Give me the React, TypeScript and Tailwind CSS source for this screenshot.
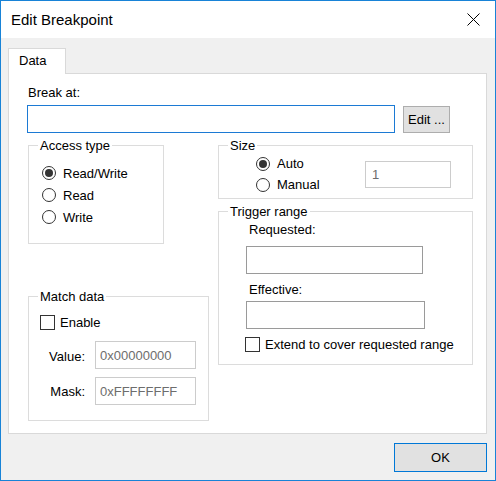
import type { ReactNode } from 'react'

const font = "font-['Liberation_Sans',Arial,sans-serif]"

function GroupBox({
  title,
  className,
  children,
}: {
  title: string
  className: string
  children: ReactNode
}) {
  return (
    <div className={`relative border border-[#dcdcdc] ${className}`}>
      <span className="absolute -top-[8px] left-[9px] bg-white px-[2px] leading-[15px]">
        {title}
      </span>
      {children}
    </div>
  )
}

function Radio({ label, checked }: { label: string; checked?: boolean }) {
  return (
    <div className="flex h-[22px] items-center gap-[7px]">
      <span className="flex h-[14px] w-[14px] items-center justify-center rounded-full border border-[#333333] bg-white">
        {checked ? <span className="h-[8px] w-[8px] rounded-full bg-[#333333]" /> : null}
      </span>
      <span className="leading-[15px]">{label}</span>
    </div>
  )
}

function Check({ label }: { label: string }) {
  return (
    <div className="flex items-center gap-[5px]">
      <span className="h-[15px] w-[15px] border border-[#333333] bg-white" />
      <span className="leading-[15px]">{label}</span>
    </div>
  )
}

function TextBox({
  className,
  value,
  disabled,
}: {
  className: string
  value?: string
  disabled?: boolean
}) {
  return (
    <div
      className={`flex items-center border bg-white px-[4px] leading-[15px] ${
        disabled ? 'border-[#cccccc] text-[#6d6d6d]' : 'border-[#9a9a9a]'
      } ${className}`}
    >
      {value}
    </div>
  )
}

export default function App() {
  return (
    <div
      className={`flex h-[481px] w-[496px] flex-col border border-[#1883d7] bg-[#f0f0f0] text-[13px] text-black ${font}`}
    >
      <div className="flex h-[37px] items-center justify-between bg-white pl-[10px] pr-[15px]">
        <span className="text-[15px] leading-[18px]">Edit Breakpoint</span>
        <svg width="13" height="13" viewBox="0 0 13 13" className="mb-[1px]">
          <path d="M0.5 0.5 L12.5 12.5 M12.5 0.5 L0.5 12.5" stroke="#000" strokeWidth="1" />
        </svg>
      </div>

      <div className="flex flex-1 flex-col pl-[7px] pt-[10px]">
        <div className="flex">
          <div className="relative z-10 -mb-px h-[26px] w-[58px] border border-b-0 border-[#d9d9d9] bg-white pl-[10px] pt-[4px] leading-[15px]">
            Data
          </div>
        </div>

        <div className="h-[361px] w-[479px] border border-[#d9d9d9] bg-white pl-[18px] pt-[11px]">
          <div className="ml-[1px] leading-[15px]">Break at:</div>
          <div className="mt-[5px] flex items-start">
            <div className="h-[28px] w-[368px] border border-[#1c7ad4] bg-white" />
            <button className="ml-[8px] mt-[1px] h-[27px] w-[47px] border border-[#adadad] bg-[#e1e1e1] leading-[15px]">
              Edit ...
            </button>
          </div>

          <div className="ml-[1px] mt-[12px] flex gap-[9px]">
            <div className="flex w-[181px] flex-col">
              <GroupBox title="Access type" className="h-[99px] w-[136px] pl-[13px] pt-[16px]">
                <Radio label="Read/Write" checked />
                <Radio label="Read" />
                <Radio label="Write" />
              </GroupBox>

              <GroupBox title="Match data" className="mt-[52px] h-[125px] w-[181px] pl-[11px] pt-[18px]">
                <Check label="Enable" />
                <div className="-ml-[11px] mt-[11px] flex items-center">
                  <span className="w-[56px] pt-[2px] text-right leading-[15px]">Value:</span>
                  <TextBox className="ml-[10px] h-[28px] w-[101px]" value="0x00000000" disabled />
                </div>
                <div className="-ml-[11px] mt-[8px] flex items-center">
                  <span className="w-[56px] text-right leading-[15px]">Mask:</span>
                  <TextBox className="ml-[10px] h-[28px] w-[101px]" value="0xFFFFFFFF" disabled />
                </div>
              </GroupBox>
            </div>

            <div className="flex w-[255px] flex-col">
              <GroupBox title="Size" className="flex h-[54px] w-[255px] pl-[37px] pt-[7px]">
                <div className="w-[109px]">
                  <div className="flex h-[21px] items-center gap-[7px]">
                    <span className="flex h-[14px] w-[14px] items-center justify-center rounded-full border border-[#333333] bg-white">
                      <span className="h-[8px] w-[8px] rounded-full bg-[#333333]" />
                    </span>
                    <span className="leading-[15px]">Auto</span>
                  </div>
                  <div className="flex h-[21px] items-center gap-[7px]">
                    <span className="h-[14px] w-[14px] rounded-full border border-[#333333] bg-white" />
                    <span className="leading-[15px]">Manual</span>
                  </div>
                </div>
                <TextBox className="mt-[8px] h-[27px] w-[86px] pl-[6px]" value="1" disabled />
              </GroupBox>

              <GroupBox title="Trigger range" className="mt-[12px] h-[154px] w-[255px] pl-[27px] pt-[10px]">
                <div className="ml-[3px] leading-[15px]">Requested:</div>
                <TextBox className="mt-[9px] h-[28px] w-[177px]" />
                <div className="ml-[3px] mt-[8px] leading-[15px]">Effective:</div>
                <TextBox className="mt-[4px] h-[28px] w-[179px]" />
                <div className="-ml-[1px] mt-[8px]">
                  <Check label="Extend to cover requested range" />
                </div>
              </GroupBox>
            </div>
          </div>
        </div>

        <div className="mt-[9px] flex w-[479px] justify-end">
          <button className="h-[29px] w-[93px] border border-[#0078d7] bg-[#e1e1e1] leading-[15px]">
            OK
          </button>
        </div>
      </div>
    </div>
  )
}
